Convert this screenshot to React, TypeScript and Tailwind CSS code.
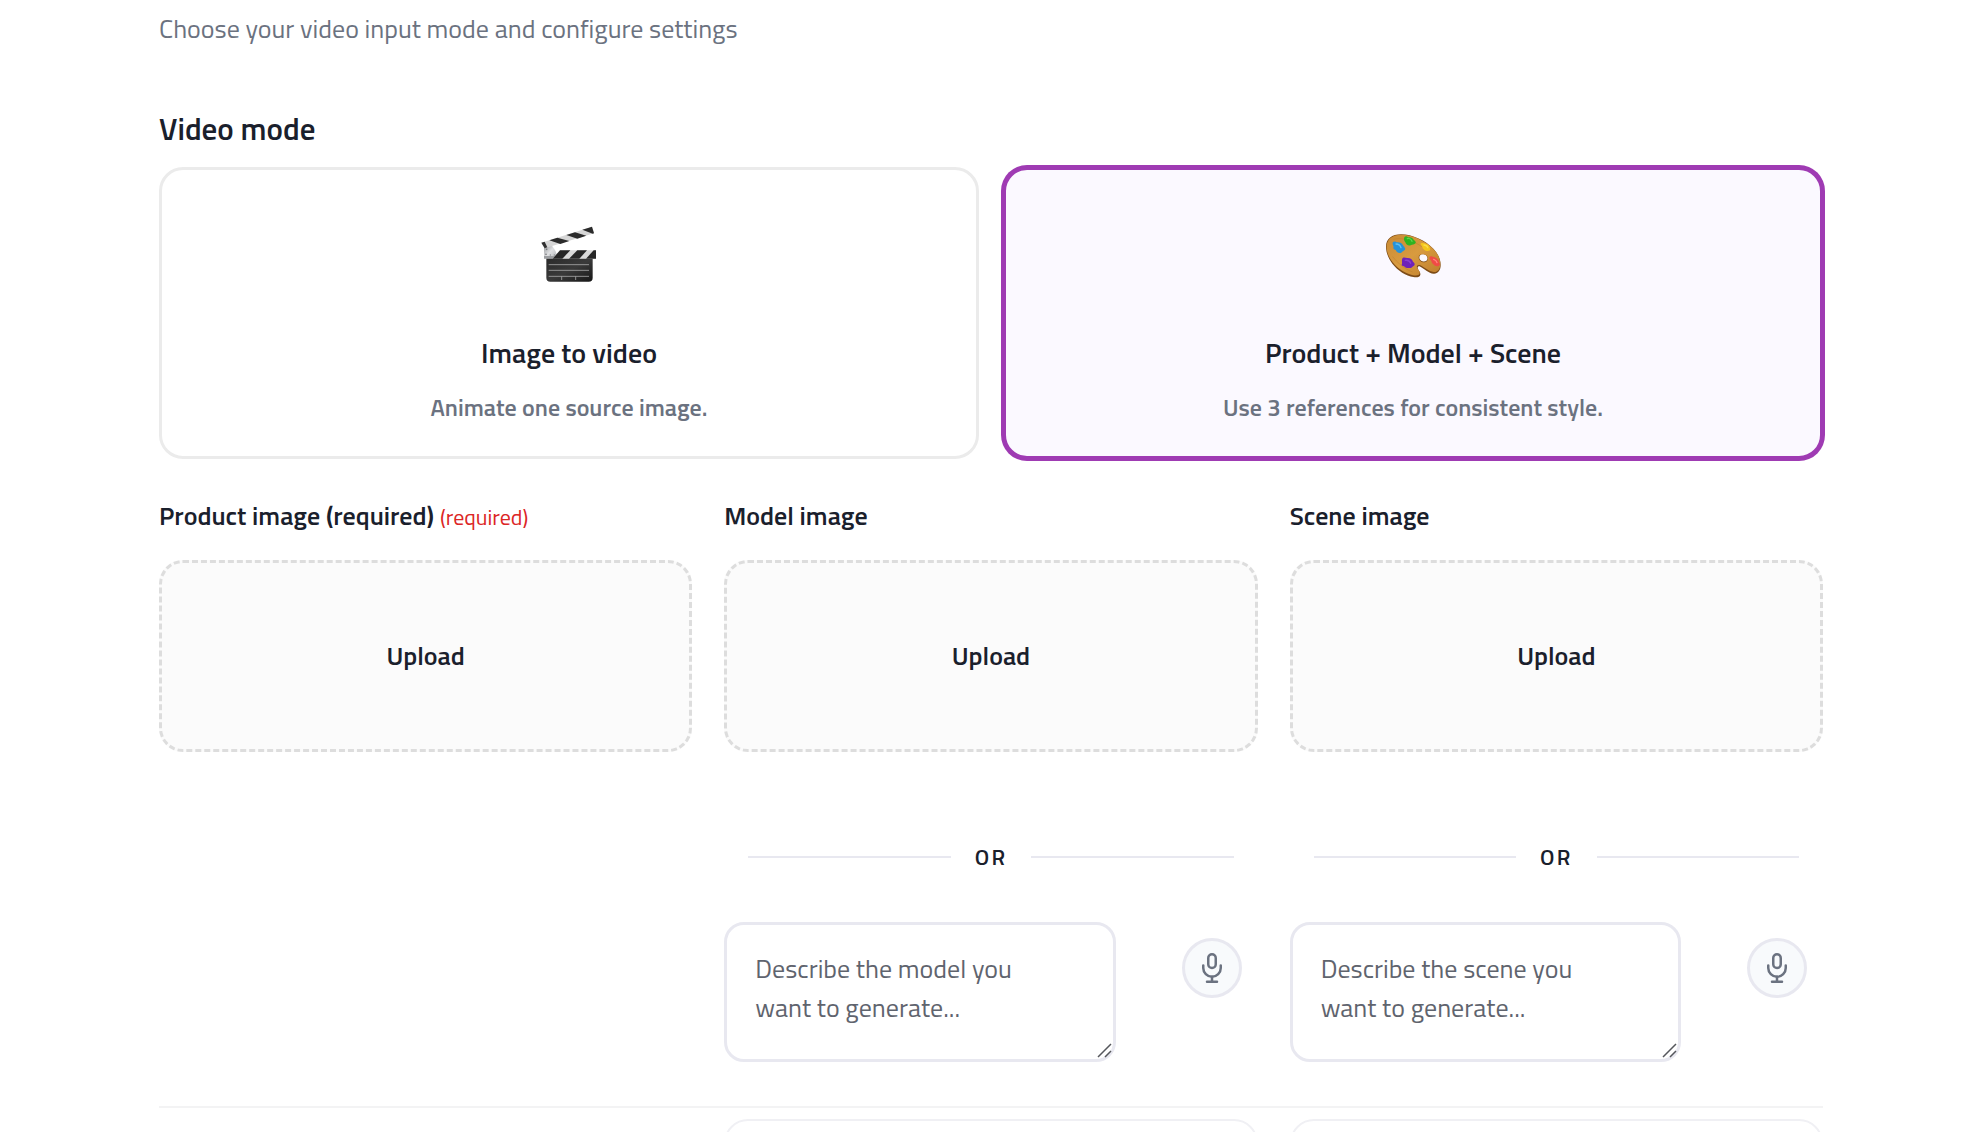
import { useState } from 'react'
import type { ReactNode } from 'react'

function ClapperIcon() {
  return (
    <svg width="56" height="56" viewBox="123 78 168 168" aria-hidden="true">
      <defs>
        <linearGradient id="slate" x1="0" y1="0" x2="1" y2="1">
          <stop offset="0" stopColor="#2a2a2a" />
          <stop offset="0.5" stopColor="#3a3a3a" />
          <stop offset="1" stopColor="#161616" />
        </linearGradient>
        <linearGradient id="hinge" x1="0" y1="0" x2="1" y2="1">
          <stop offset="0" stopColor="#8f9194" />
          <stop offset="0.5" stopColor="#dfe0e2" />
          <stop offset="1" stopColor="#b4b6b9" />
        </linearGradient>
      </defs>
      {/* hinge plate */}
      <path d="M132 140l18-8c10 8 18 20 21 34l-8 10h-31z" fill="url(#hinge)" />
      <circle cx="140" cy="148" r="2.5" fill="#77797c" />
      <circle cx="138" cy="163" r="2.5" fill="#77797c" />
      <circle cx="151" cy="165" r="2" fill="#8a8c8f" />
      <circle cx="163" cy="165" r="2" fill="#8a8c8f" />
      {/* raised stick */}
      <path d="M124 128l152-48 6 20-148 45z" fill="#d6d6d6" />
      <path d="M124 128l10-3 8 17-8 3z" fill="#303030" />
      <path d="M148 121l24-8 36 10-27 9z" fill="#2b2b2b" />
      <path d="M199 105l26-8 34 10-27 9z" fill="#2b2b2b" />
      <path d="M247 89l29-9 6 20-4 1z" fill="#2b2b2b" />
      {/* lower stick */}
      <path d="M132 168h34v8h-34z" fill="#9c9ea1" />
      <path d="M180 151h108v25H158z" fill="#d9d9d9" />
      <path d="M180 151h31l-24 25h-29z" fill="#262626" />
      <path d="M232 151h29l-23 25h-31z" fill="#262626" />
      <path d="M281 151h7v25h-30z" fill="#262626" />
      {/* slate */}
      <path d="M139 176h139v57a12 12 0 0 1-12 12H151a12 12 0 0 1-12-12z" fill="url(#slate)" />
      <path d="M146 194h121M146 211h121M146 229h121" stroke="#a6a6a6" strokeWidth="2.5" />
      <path d="M185 229v11M227 229v11" stroke="#a6a6a6" strokeWidth="2.5" />
    </svg>
  )
}

function PaletteIcon() {
  return (
    <svg width="56" height="56" viewBox="135 78 168 168" aria-hidden="true">
      <defs>
        <linearGradient id="wood" x1="0" y1="0" x2="1" y2="1">
          <stop offset="0" stopColor="#c98a35" />
          <stop offset="0.5" stopColor="#d89b3f" />
          <stop offset="1" stopColor="#bd7d2c" />
        </linearGradient>
      </defs>
      <path
        fillRule="evenodd"
        d="M138 140c0-24 18-37 45-37 34 0 74 19 98 44 14 15 21 32 21 48 0 17-9 27-21 26-15-1-30-16-40-21-6-3-10 1-7 7 3 7 8 10 7 17-1 7-10 9-21 7-22-3-46-19-63-40-12-16-19-34-19-51zM239 168c-3 6 1 13 8 16 7 2 13 0 15-6 2-7-3-13-10-15-6-1-11 0-13 5z"
        fill="#7d4c17"
      />
      <path
        fillRule="evenodd"
        d="M140 138c1-22 18-34 43-34 34 0 73 18 97 43 14 14 21 30 21 45 0 16-9 25-20 24-15-1-29-15-40-20-8-3-13 2-9 9 3 6 8 9 7 15-1 6-9 8-20 6-21-4-45-19-61-39-12-15-19-33-18-49zM237 168c-3 7 1 15 9 18 7 2 15 0 17-7 2-8-3-14-11-16-7-1-13 0-15 5z"
        fill="url(#wood)"
      />
      <path d="M160 118c30-8 70 8 96 30M158 170c14 18 34 36 60 46" stroke="#b87a2b" strokeWidth="2" fill="none" opacity="0.6" />
      {/* paint blobs */}
      <path d="M193 112c3-5 8-4 11 0 8-2 14 1 17 7 3 3 8 6 6 10-4 6-10 4-15 7-8 2-14-2-16-9-3-4-6-9-3-15z" fill="#2fb321" />
      <path d="M202 116c6-2 12 2 14 8" stroke="#5fd64d" strokeWidth="4" fill="none" strokeLinecap="round" />
      <path d="M159 126c5-4 9 0 12 1 9-1 15 3 18 9 2 4 9 9 6 13-4 4-8 4-11 9-7 3-14-1-17-8-6-2-9-5-6-10-2-5-5-9-2-14z" fill="#2592d8" />
      <path d="M168 132c8 0 13 5 15 11" stroke="#5cc0f2" strokeWidth="4" fill="none" strokeLinecap="round" />
      <path d="M243 130c5-3 9 1 15 1 7 2 11 7 11 12 3 4 2 9-3 9-6 2-11 1-15-4-5-4-3-8-6-11-3-2-4-5-2-7z" fill="#f4c61c" />
      <path d="M252 135c6 1 10 4 11 8" stroke="#fbdd4b" strokeWidth="4" fill="none" strokeLinecap="round" />
      <path d="M270 170c5-3 9 1 14 2 8 3 13 9 13 15 4 4 4 8-1 11-6 2-12 0-16-5-6-4-4-9-8-13-4-3-5-7-2-10z" fill="#f04b46" />
      <path d="M281 178c6 2 9 6 10 10" stroke="#ff857e" strokeWidth="4" fill="none" strokeLinecap="round" />
      <path d="M188 174c5-4 10 1 15 0 9 0 14 5 16 11 5 4 7 8 3 12-4 2-6 6-11 7-8 1-15 0-19-5-5-1-9-3-6-8 1-5-2-12 2-17z" fill="#6f22b8" />
      <path d="M196 181c8-1 14 3 16 9" stroke="#8a3fd0" strokeWidth="4" fill="none" strokeLinecap="round" />
    </svg>
  )
}

function MicIcon() {
  return (
    <svg width="30" height="30" viewBox="0 0 24 24" fill="none" stroke="currentColor" strokeWidth="2" strokeLinecap="round" strokeLinejoin="round" aria-hidden="true">
      <rect x="9" y="1" width="6" height="11" rx="3" />
      <path d="M19 10v2a7 7 0 0 1-14 0v-2" />
      <path d="M12 19v4M8 23h8" />
    </svg>
  )
}

interface Mode {
  id: string
  title: string
  hint: string
  icon: ReactNode
}

const modes: Mode[] = [
  { id: 'image', title: 'Image to video', hint: 'Animate one source image.', icon: <ClapperIcon /> },
  { id: 'references', title: 'Product + Model + Scene', hint: 'Use 3 references for consistent style.', icon: <PaletteIcon /> },
]

interface Slot {
  id: string
  label: string
  required?: boolean
  placeholder?: string
}

const slots: Slot[] = [
  { id: 'product', label: 'Product image (required)', required: true },
  { id: 'model', label: 'Model image', placeholder: 'Describe the model you want to generate...' },
  { id: 'scene', label: 'Scene image', placeholder: 'Describe the scene you want to generate...' },
]

function PromptField({ id, placeholder }: { id: string; placeholder: string }) {
  return (
    <>
      <div className="mt-[89px] flex items-center gap-6 px-6">
        <div className="h-0.5 flex-1 bg-[#e8e8f0]" />
        <span className="text-[22px] leading-8 font-semibold tracking-widest text-[#1a202c]">OR</span>
        <div className="h-0.5 flex-1 bg-[#e8e8f0]" />
      </div>
      <div className="mt-[49px] flex items-start gap-[66px] pr-4">
        <div className="relative flex min-w-0 flex-1">
          <textarea
            id={`${id}-prompt`}
            aria-label={placeholder}
            placeholder={placeholder}
            className="h-[140px] w-full resize-none rounded-[20px] border-[3px] border-[#e8e8f0] bg-white py-6 pr-12 pl-7 text-[26px] leading-[39px] text-[#1a202c] outline-none placeholder:text-[#5f646e]"
          />
          <svg className="pointer-events-none absolute right-1 bottom-1" width="15" height="15" viewBox="0 0 15 15" aria-hidden="true">
            <path d="M1 14L14 1M8 14l6-6" stroke="#55575c" strokeWidth="1.5" />
          </svg>
        </div>
        <button type="button" aria-label="Record voice" className="mt-4 flex size-[60px] shrink-0 items-center justify-center rounded-full border-[3px] border-[#e8e8f0] bg-[#f8fafc] text-[#6b7280]">
          <MicIcon />
        </button>
      </div>
    </>
  )
}

export default function App() {
  const [mode, setMode] = useState('references')

  return (
    <div className="h-screen overflow-hidden bg-white pr-[139px] pl-[159px] font-['Titillium_Web',Roboto,sans-serif] text-[#1a202c]">
      <p className="pt-[9px] text-[26px] leading-10 text-[#6b7280]">Choose your video input mode and configure settings</p>

      <h2 className="mt-14 text-[31px] leading-[48px] font-semibold">Video mode</h2>
      <div className="mt-3.5 grid grid-cols-2 gap-6">
        {modes.map(m => (
          <button
            key={m.id}
            type="button"
            aria-pressed={mode === m.id}
            onClick={() => setMode(m.id)}
            className={`flex flex-col items-center rounded-3xl border-[3px] pt-14 pb-[31px] ${
              mode === m.id ? 'border-[#9f3bb3] bg-[#fbf9ff] ring-2 ring-[#9f3bb3]' : 'border-[#ebebeb] bg-white'
            }`}
          >
            {m.icon}
            <span className="mt-[49px] text-[28px] leading-[44px] font-semibold">{m.title}</span>
            <span className="mt-3.5 text-[24px] leading-9 font-semibold text-[#6b7280]">{m.hint}</span>
          </button>
        ))}
      </div>

      <div className="mt-[37px] grid grid-cols-3 gap-8">
        {slots.map(slot => (
          <div key={slot.id}>
            <label htmlFor={`${slot.id}-upload`} className="flex items-baseline gap-1.5 text-[26px] leading-10 font-semibold">
              {slot.label}
              {slot.required && <span className="text-[22px] leading-8 font-normal text-[#dc2626]">(required)</span>}
            </label>
            <button
              id={`${slot.id}-upload`}
              type="button"
              className="mt-6 h-48 w-full rounded-3xl border-[3px] border-dashed border-[#dddddd] bg-[#fbfbfb] text-[26px] leading-10 font-semibold"
            >
              Upload
            </button>
            {slot.placeholder && <PromptField id={slot.id} placeholder={slot.placeholder} />}
          </div>
        ))}
      </div>

      {/* next section, cut off by the bottom edge */}
      <div className="mt-11 grid grid-cols-3 gap-8 border-t-2 border-[#f3f3f4] pt-[11px]">
        <div className="col-start-2 h-40 rounded-3xl border-2 border-[#f0f0f4]" />
        <div className="h-40 rounded-3xl border-2 border-[#f0f0f4]" />
      </div>
    </div>
  )
}
